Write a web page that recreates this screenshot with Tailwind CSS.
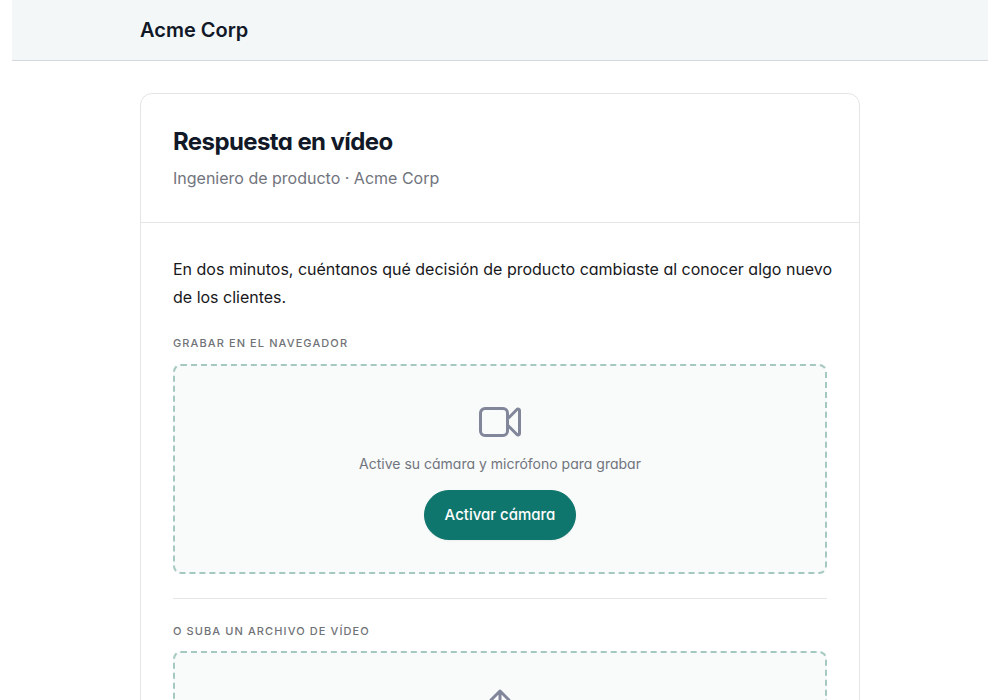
<!DOCTYPE html>
<html lang="es">
<head>
<meta charset="utf-8">
<meta name="viewport" content="width=device-width, initial-scale=1">
<title>Respuesta en vídeo</title>
<script src="https://cdn.jsdelivr.net/npm/@tailwindcss/browser@4"></script>
</head>
<body class="h-screen overflow-hidden bg-white px-3 font-['Inter',sans-serif] text-[#111827] antialiased [font-feature-settings:'cv11']">
<header class="border-b border-[#d3d9dc] bg-[#f3f7f8]">
  <div class="mx-auto max-w-[720px] py-4">
    <p class="text-xl leading-7 font-semibold">Acme Corp</p>
  </div>
</header>
<main class="mx-auto mt-8 max-w-[720px] rounded-xl border border-[#e4e5e7] bg-white">
  <div class="border-b border-[#e4e5e7] p-8">
    <h1 class="text-2xl leading-8 font-bold tracking-tight">Respuesta en vídeo</h1>
    <p class="mt-2 text-base text-[#71747d]">Ingeniero de producto · Acme Corp</p>
  </div>
  <div class="p-8">
    <p class="-mr-2 text-base leading-7 text-[#18181b]">En dos minutos, cuéntanos qué decisión de producto cambiaste al conocer algo nuevo de los clientes.</p>
    <section class="mt-6">
      <h2 class="text-[11px] leading-4 font-medium tracking-widest text-[#6f7276] uppercase">Grabar en el navegador</h2>
      <div class="mt-[13px] flex flex-col items-center rounded-lg border-2 border-dashed border-[#a5c8c1] bg-[#f8fbfa] p-8">
        <svg class="size-12 text-[#81869a]" viewBox="0 0 24 24" fill="none" stroke="currentColor" stroke-width="1.5" stroke-linecap="round" stroke-linejoin="round" aria-hidden="true"><path d="m15.75 10.5 4.72-4.72a.75.75 0 0 1 1.28.53v11.38a.75.75 0 0 1-1.28.53l-4.72-4.72M4.5 18.75h9a2.25 2.25 0 0 0 2.25-2.25v-9a2.25 2.25 0 0 0-2.25-2.25h-9A2.25 2.25 0 0 0 2.25 7.5v9a2.25 2.25 0 0 0 2.25 2.25Z"/></svg>
        <p class="mt-2 text-sm text-[#71747d]">Active su cámara y micrófono para grabar</p>
        <button type="button" class="mt-4 rounded-full border border-[#0f766e] bg-[#0f766e] px-5 py-3 text-[15px] leading-6 font-medium text-white shadow-xs">Activar cámara</button>
      </div>
    </section>
    <section class="mt-6 border-t border-[#e4e5e7] pt-6">
      <h2 class="text-[11px] leading-4 font-medium tracking-widest text-[#6f7276] uppercase">O suba un archivo de vídeo</h2>
      <div class="mt-3 flex flex-col items-center rounded-lg border-2 border-dashed border-[#a5c8c1] bg-[#f8fbfa] p-8">
        <svg class="size-12 text-[#81869a]" viewBox="0 0 24 24" fill="none" stroke="currentColor" stroke-width="1.5" stroke-linecap="round" stroke-linejoin="round" aria-hidden="true"><path d="M12 16.500V3m-4.500 4.500L12 3l4.500 4.500M3 16.500v2.250A2.250 2.250 0 0 0 5.250 21h13.500A2.250 2.250 0 0 0 21 18.750V16.500"/></svg>
      </div>
    </section>
  </div>
</main>
</body>
</html>
